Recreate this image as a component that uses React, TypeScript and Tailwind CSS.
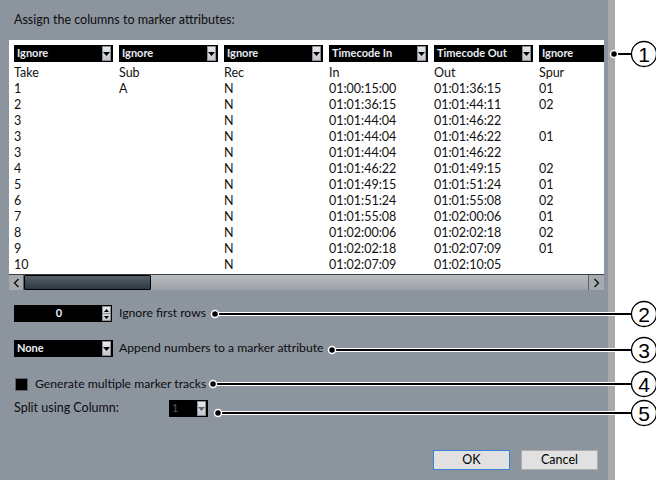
import React from 'react';

const headers = ['Ignore', 'Ignore', 'Ignore', 'Timecode In', 'Timecode Out', 'Ignore'];

const rows: string[][] = [
  ['Take', 'Sub', 'Rec', 'In', 'Out', 'Spur'],
  ['1', 'A', 'N', '01:00:15:00', '01:01:36:15', '01'],
  ['2', '', 'N', '01:01:36:15', '01:01:44:11', '02'],
  ['3', '', 'N', '01:01:44:04', '01:01:46:22', ''],
  ['3', '', 'N', '01:01:44:04', '01:01:46:22', '01'],
  ['3', '', 'N', '01:01:44:04', '01:01:46:22', ''],
  ['4', '', 'N', '01:01:46:22', '01:01:49:15', '02'],
  ['5', '', 'N', '01:01:49:15', '01:01:51:24', '01'],
  ['6', '', 'N', '01:01:51:24', '01:01:55:08', '02'],
  ['7', '', 'N', '01:01:55:08', '01:02:00:06', '01'],
  ['8', '', 'N', '01:02:00:06', '01:02:02:18', '02'],
  ['9', '', 'N', '01:02:02:18', '01:02:07:09', '01'],
  ['10', '', 'N', '01:02:07:09', '01:02:10:05', ''],
];

// small grey button with the down triangle
const ArrowBox = ({ dim = false }: { dim?: boolean }) => (
  <div className="my-[1px] mr-[2px] flex w-[9px] shrink-0 items-center justify-center border border-[#8a9096] bg-gradient-to-b from-[#e6e9ec] to-[#c2c7cc]">
    <svg width="7" height="4" viewBox="0 0 7 4">
      <path d="M0 0h7L3.5 4z" fill={dim ? '#5b6670' : '#000'} />
    </svg>
  </div>
);

const HeaderSelect = ({ label, arrow = true }: { label: string; arrow?: boolean }) => (
  <div className="flex h-[17px] w-[99px] shrink-0 items-stretch bg-black">
    <span className="flex flex-1 items-center pl-[3px] text-[11px] font-bold text-[#e8ecf4]">{label}</span>
    {arrow && <ArrowBox />}
  </div>
);

const Chevron = ({ dir }: { dir: 'l' | 'r' }) => (
  <svg width="7" height="10" viewBox="0 0 7 10">
    <path d={dir === 'l' ? 'M5.5 1L1.5 5l4 4' : 'M1.5 1l4 4-4 4'} fill="none" stroke="#111" strokeWidth="1.4" />
  </svg>
);

const Callouts = () => {
  const items = [
    { n: '1', x: 614, y: 54 },
    { n: '2', x: 215, y: 314 },
    { n: '3', x: 332, y: 350 },
    { n: '4', x: 213, y: 384 },
    { n: '5', x: 218, y: 413 },
  ];
  return (
    <svg className="pointer-events-none absolute left-0 top-0" width="656" height="480">
      {items.map((it) => (
        <g key={it.n}>
          <line x1={it.x} y1={it.y} x2={631} y2={it.y} stroke="#fff" strokeWidth="4" />
          <line x1={it.x} y1={it.y} x2={631} y2={it.y} stroke="#000" strokeWidth="2" />
          <circle cx={it.x} cy={it.y} r="3.5" fill="#000" stroke="#fff" strokeWidth="1.5" />
          <circle cx={644} cy={it.y} r="12.5" fill="#fff" stroke="#000" strokeWidth="1.3" />
          <text
            x={644}
            y={it.y + 7.5}
            textAnchor="middle"
            fontSize="21"
            fontFamily="'Liberation Sans', Arial, sans-serif"
            fill="#000"
          >
            {it.n}
          </text>
        </g>
      ))}
    </svg>
  );
};

const App = () => {
  return (
    <div
      className="relative flex h-[480px] w-[656px] overflow-hidden bg-white text-[12px] text-[#111]"
      style={{ fontFamily: "Lato, 'Noto Sans', sans-serif" }}
    >
      {/* dialog */}
      <div className="flex w-[608px] shrink-0 flex-col bg-[#8c959e] pl-[9px] pt-[12px]">
        <div className="ml-[5px] h-[16px] text-[12.5px] leading-[16px] text-[#0c0c10]">Assign the columns to marker attributes:</div>

        {/* table */}
        <div className="mt-[12px] flex h-[250px] w-[595px] flex-col overflow-hidden bg-white">
          <div className="flex gap-[6px] pl-[5px] pt-[5px]">
            {headers.map((h, i) => (
              <HeaderSelect key={i} label={h} arrow={i < 5} />
            ))}
          </div>
          <div className="mt-[3px] flex flex-1 flex-col pl-[5px] text-[12.5px]">
            {rows.map((r, i) => (
              <div key={i} className="flex h-[16px] gap-[6px] leading-[16px]">
                {r.map((c, j) => (
                  <span key={j} className="w-[99px] shrink-0 whitespace-nowrap">
                    {c}
                  </span>
                ))}
              </div>
            ))}
          </div>
          {/* scrollbar */}
          <div className="flex h-[16px] shrink-0 border-t border-[#3a3f44] bg-gradient-to-b from-[#b9bdc1] to-[#9da2a7]">
            <div className="flex w-[15px] items-center justify-center border-r border-[#5c6167] bg-[#a6abb0]">
              <Chevron dir="l" />
            </div>
            <div className="w-[127px] rounded-[1px] border border-black bg-gradient-to-b from-[#56616c] to-[#2f3942]" />
            <div className="flex-1" />
            <div className="flex w-[16px] items-center justify-center border-l border-[#5c6167] bg-[#a6abb0]">
              <Chevron dir="r" />
            </div>
          </div>
        </div>

        {/* options */}
        <div className="ml-[5px] mt-[15px] flex h-[17px] items-center">
          <div className="flex h-[17px] w-[98px] items-stretch bg-black">
            <span className="flex flex-1 items-center justify-center pl-[2px] text-[11px] font-bold text-[#e8ecf4]">0</span>
            <div className="my-[1px] mr-[1px] flex w-[9px] flex-col border border-[#8a9096] bg-gradient-to-b from-[#e6e9ec] to-[#c2c7cc]">
              <div className="flex flex-1 items-center justify-center border-b border-[#8a9096]">
                <svg width="5" height="3" viewBox="0 0 5 3">
                  <path d="M0 3h5L2.5 0z" fill="#000" />
                </svg>
              </div>
              <div className="flex flex-1 items-center justify-center">
                <svg width="5" height="3" viewBox="0 0 5 3">
                  <path d="M0 0h5L2.5 3z" fill="#000" />
                </svg>
              </div>
            </div>
          </div>
          <span className="ml-[7px] text-[12.2px] text-[#0c0c10]">Ignore first rows</span>
        </div>

        <div className="ml-[5px] mt-[18px] flex h-[17px] items-center">
          <div className="flex h-[17px] w-[99px] items-stretch bg-black">
            <span className="flex flex-1 items-center pl-[3px] text-[11px] font-bold text-[#e8ecf4]">None</span>
            <ArrowBox />
          </div>
          <span className="ml-[6px] text-[12.2px] text-[#0c0c10]">Append numbers to a marker attribute</span>
        </div>

        <div className="ml-[6px] mt-[20px] flex h-[14px] items-center">
          <div className="h-[13px] w-[13px] border border-[#5a6168] bg-black" />
          <span className="ml-[7px] text-[12.2px] text-[#0c0c10]">Generate multiple marker tracks</span>
        </div>

        <div className="ml-[5px] mt-[9px] flex h-[17px] items-center">
          <span className="w-[155px] text-[12.5px] text-[#0c0c10]">Split using Column:</span>
          <div className="flex h-[17px] w-[39px] items-stretch bg-black">
            <span className="flex flex-1 items-center pl-[3px] text-[11px] text-[#4e5d6e]">1</span>
            <ArrowBox dim />
          </div>
        </div>

        <div className="mt-[33px] flex justify-end gap-[11px] pr-[10px]">
          <button className="h-[20px] w-[77px] border border-[#3c7fd3] bg-[#e1e1e1] text-[12.5px] text-black">OK</button>
          <button className="h-[20px] w-[77px] border border-[#adadad] bg-[#e1e1e1] text-[12.5px] text-black">Cancel</button>
        </div>
      </div>
      <div className="w-[7px] shrink-0 bg-[#a9a9a9]" />
      <div className="flex-1 bg-white" />

      <Callouts />
    </div>
  );
};

export default App;
